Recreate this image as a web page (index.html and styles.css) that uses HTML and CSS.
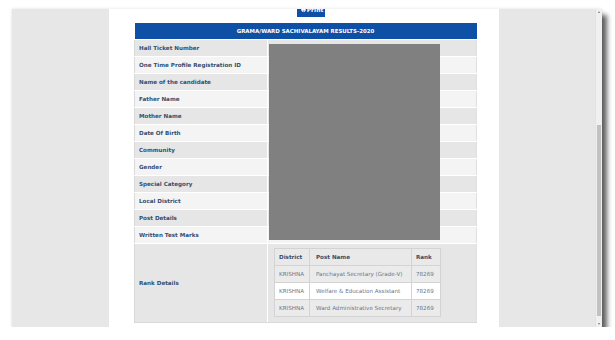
FILE: index.html
```html
<!DOCTYPE html>
<html lang="en">
<head>
<meta charset="utf-8">
<title>Grama/Ward Sachivalayam Results-2020</title>
<link rel="stylesheet" href="styles.css">
</head>
<body>
<div class="window">
  <div class="viewport">
    <div class="page">
      <div class="print-wrap">
        <button class="print-btn" type="button">
          <svg class="print-icon" viewBox="0 0 10 10" width="5" height="5" aria-hidden="true">
            <rect x="2.5" y="0.5" width="5" height="3" fill="none" stroke="#fff" stroke-width="1"/>
            <rect x="0.5" y="3.5" width="9" height="4" fill="#fff"/>
            <rect x="2.5" y="6.5" width="5" height="3" fill="#0e50a5" stroke="#fff" stroke-width="1"/>
          </svg>Print
        </button>
      </div>
      <div class="results">
        <table class="result-table">
          <colgroup>
            <col class="col-label">
            <col class="col-value">
          </colgroup>
          <thead>
            <tr><th colspan="2">GRAMA/WARD SACHIVALAYAM RESULTS-2020</th></tr>
          </thead>
          <tbody>
            <tr><td class="label">Hall Ticket Number</td><td class="value"></td></tr>
            <tr><td class="label">One Time Profile Registration ID</td><td class="value"></td></tr>
            <tr><td class="label">Name of the candidate</td><td class="value"></td></tr>
            <tr><td class="label">Father Name</td><td class="value"></td></tr>
            <tr><td class="label">Mother Name</td><td class="value"></td></tr>
            <tr><td class="label">Date Of Birth</td><td class="value"></td></tr>
            <tr><td class="label">Community</td><td class="value"></td></tr>
            <tr><td class="label">Gender</td><td class="value"></td></tr>
            <tr><td class="label">Special Category</td><td class="value"></td></tr>
            <tr><td class="label">Local District</td><td class="value"></td></tr>
            <tr><td class="label">Post Details</td><td class="value"></td></tr>
            <tr><td class="label">Written Test Marks</td><td class="value"></td></tr>
            <tr class="rank-row">
              <td class="label">Rank Details</td>
              <td class="value rank-cell">
                <table class="rank-table">
                  <colgroup>
                    <col class="c-district">
                    <col class="c-post">
                    <col class="c-rank">
                  </colgroup>
                  <thead>
                    <tr><th>District</th><th>Post Name</th><th>Rank</th></tr>
                  </thead>
                  <tbody>
                    <tr><td>KRISHNA</td><td>Panchayat Secretary (Grade-V)</td><td>78269</td></tr>
                    <tr><td>KRISHNA</td><td>Welfare &amp; Education Assistant</td><td>78269</td></tr>
                    <tr><td>KRISHNA</td><td>Ward Administrative Secretary</td><td>78269</td></tr>
                  </tbody>
                </table>
              </td>
            </tr>
          </tbody>
        </table>
        <div class="redact"></div>
      </div>
    </div>
  </div>
  <div class="scrollbar">
    <span class="arrow arrow-up"></span>
    <div class="track"><div class="thumb"></div></div>
    <span class="arrow arrow-down"></span>
  </div>
</div>
</body>
</html>
```
FILE: styles.css
```css
* { box-sizing: border-box; }

html, body {
  margin: 0;
  background: #ffffff;
}

body {
  padding: 9px 0 0 12px;
  font-family: "DejaVu Sans", Verdana, sans-serif;
}

.window {
  width: 590px;
  height: 318px;
  display: flex;
  overflow: hidden;
  background: #e7e7e7;
  box-shadow: 5px 6px 5px rgba(0, 0, 0, 0.62), 0 0 3px rgba(0, 0, 0, 0.12);
}

.viewport {
  flex: 1;
  display: flex;
  justify-content: center;
  overflow: hidden;
  background: #e7e7e7;
  padding-left: 1px;
}

.page {
  width: 390px;
  background: #ffffff;
  padding: 0 23px 0 25px;
}

.print-wrap {
  display: flex;
  justify-content: center;
  margin-top: -7px;
  padding-left: 12px;
}

.print-btn {
  height: 15px;
  width: 28px;
  padding: 0 0 0 2px;
  border: none;
  background: #0e50a5;
  color: #ffffff;
  font-family: "DejaVu Sans", Verdana, sans-serif;
  font-weight: bold;
  font-size: 6px;
  display: flex;
  align-items: center;
  justify-content: center;
  gap: 1px;
}

.results {
  position: relative;
  margin-top: 6px;
}

.result-table {
  width: 342px;
  border-collapse: collapse;
  table-layout: fixed;
}

.result-table .col-label { width: 133px; }
.result-table .col-value { width: 209px; }

.result-table > thead th {
  height: 16px;
  background: #0e50a5;
  color: #ffffff;
  font-size: 5.45px;
  font-weight: bold;
  text-align: center;
  padding: 0;
  border-bottom: 1px solid #ffffff;
}

.result-table > tbody > tr > td {
  height: 17px;
  padding: 0;
  border-bottom: 1px solid #ffffff;
  vertical-align: middle;
}

.result-table > tbody > tr:nth-child(odd) > td { background: #e6e6e6; }
.result-table > tbody > tr:nth-child(even) > td { background: #f4f4f4; }

.result-table td.label {
  padding-left: 4px;
  border-left: 1px solid #d9d9d9;
  border-right: 1px solid #ffffff;
  color: #34506f;
  font-size: 5.6px;
  font-weight: bold;
  white-space: nowrap;
}

.result-table td.value {
  border-right: 1px solid #e0e0e0;
}

.result-table > tbody > tr.rank-row > td {
  height: 78px;
  border-bottom: 1px solid #d9d9d9;
}

.result-table td.rank-cell {
  padding: 4px 0 5px 6px;
  vertical-align: top;
}

.rank-table {
  width: 166px;
  border-collapse: collapse;
  table-layout: fixed;
  border: 1px solid #cfcfcf;
}

.rank-table .c-district { width: 35px; }
.rank-table .c-post { width: 102px; }
.rank-table .c-rank { width: 29px; }

.rank-table th,
.rank-table td {
  height: 17px;
  padding: 0 0 0 4px;
  border: 1px solid #d3d3d3;
  text-align: left;
  vertical-align: middle;
  white-space: nowrap;
  overflow: hidden;
  font-size: 5.6px;
}

.rank-table th:nth-child(2),
.rank-table td:nth-child(2) { padding-left: 6px; }

.rank-table th {
  background: #e9e9e9;
  color: #34506f;
  font-weight: bold;
}

.rank-table td {
  color: #667890;
  font-weight: normal;
}

.rank-table tbody tr:nth-child(odd) td { background: #ebebeb; }
.rank-table tbody tr:nth-child(even) td { background: #ffffff; }

.redact {
  position: absolute;
  left: 135px;
  top: 21px;
  width: 171px;
  height: 196px;
  background: #808080;
}

.scrollbar {
  width: 7px;
  display: flex;
  flex-direction: column;
  align-items: center;
  background: #f0f0f0;
  border-left: 1px solid #e2e2e2;
}

.arrow {
  width: 0;
  height: 0;
  border-left: 1.5px solid transparent;
  border-right: 1.5px solid transparent;
  margin: 2px 0;
}

.arrow-up { border-bottom: 2px solid #7a7a7a; }
.arrow-down { border-top: 2px solid #7a7a7a; }

.track {
  flex: 1;
  width: 100%;
  display: flex;
  flex-direction: column;
  justify-content: flex-end;
  padding: 0 1px 5px 1px;
}

.thumb {
  height: 191px;
  background: #c1c1c1;
}
```
